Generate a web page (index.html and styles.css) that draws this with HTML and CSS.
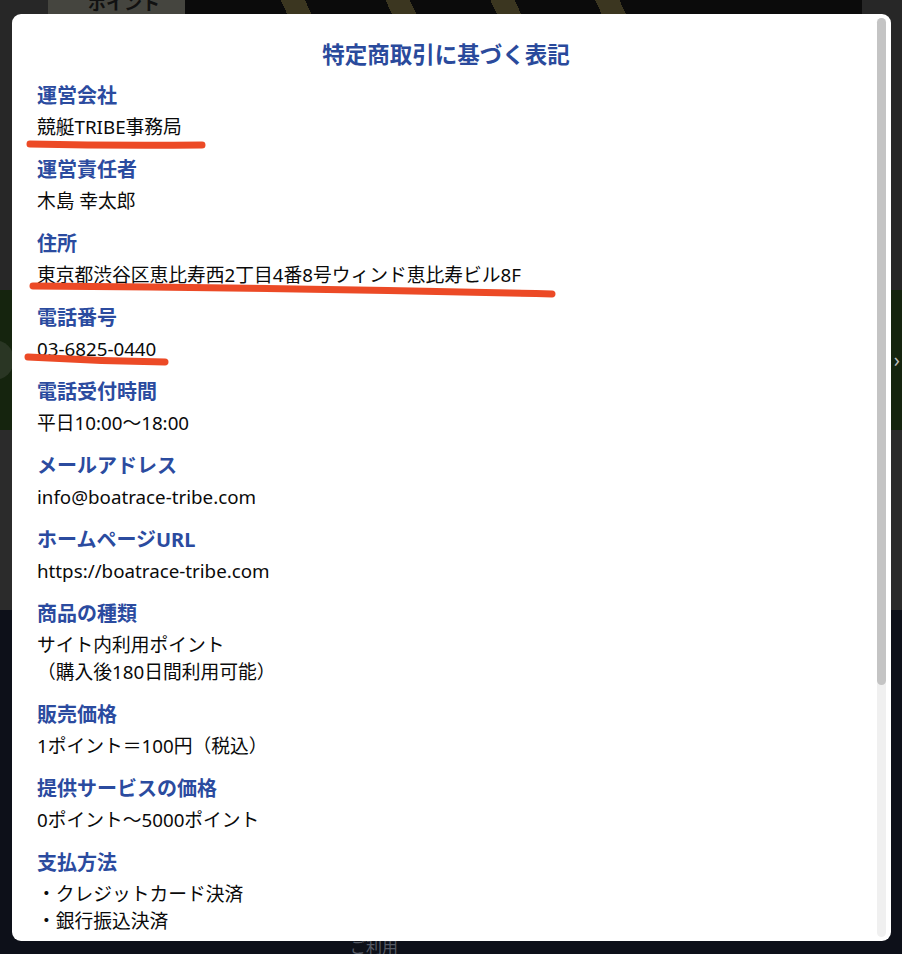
FILE: index.html
```html
<!DOCTYPE html>
<html lang="ja">
<head>
<meta charset="utf-8">
<title>特定商取引に基づく表記</title>
<link rel="stylesheet" href="styles.css">
</head>
<body>
<div class="page">
  <header class="band band-top">
    <div class="hero">
      <div class="hero-badge">ポイント</div>
      <div class="hero-art"></div>
    </div>
  </header>
  <div class="band band-green">
    <span class="circle"></span>
    <span class="arrow">›</span>
  </div>
  <div class="band band-gray"></div>
  <div class="band band-navy">
    <p class="navy-text">ご利用</p>
  </div>
</div>

<div class="modal">
  <div class="scroll">
    <div class="sheet">
      <h2 class="title">特定商取引に基づく表記</h2>
      <section class="item"><h3 class="label">運営会社</h3><p class="value">競艇TRIBE事務局</p></section>
      <section class="item"><h3 class="label">運営責任者</h3><p class="value">木島 幸太郎</p></section>
      <section class="item"><h3 class="label">住所</h3><p class="value">東京都渋谷区恵比寿西2丁目4番8号ウィンド恵比寿ビル8F</p></section>
      <section class="item"><h3 class="label">電話番号</h3><p class="value">03-6825-0440</p></section>
      <section class="item"><h3 class="label">電話受付時間</h3><p class="value">平日10:00〜18:00</p></section>
      <section class="item"><h3 class="label">メールアドレス</h3><p class="value">info@boatrace-tribe.com</p></section>
      <section class="item"><h3 class="label">ホームページURL</h3><p class="value">https://boatrace-tribe.com</p></section>
      <section class="item"><h3 class="label">商品の種類</h3><p class="value">サイト内利用ポイント<br>（購入後180日間利用可能）</p></section>
      <section class="item"><h3 class="label">販売価格</h3><p class="value">1ポイント＝100円（税込）</p></section>
      <section class="item"><h3 class="label">提供サービスの価格</h3><p class="value">0ポイント〜5000ポイント</p></section>
      <section class="item"><h3 class="label">支払方法</h3><p class="value">・クレジットカード決済<br>・銀行振込決済</p></section>
      <section class="item"><h3 class="label">代金の支払時期</h3><p class="value">ご注文時にお支払いいただきます</p></section>
      <section class="item"><h3 class="label">商品の引渡時期</h3><p class="value">決済完了後、即時反映</p></section>

      <svg class="marks" viewBox="0 0 860 400" width="860" height="400" aria-hidden="true">
        <path d="M14 126 Q100 128 186 127" />
        <path d="M17 268 Q280 270 536 276" />
        <path d="M12 339 Q80 343 149 344" />
      </svg>
    </div>
  </div>
  <div class="scrollbar"><div class="thumb"></div></div>
</div>
</body>
</html>
```

FILE: styles.css
```css
* { box-sizing: border-box; }

html, body {
  margin: 0;
  padding: 0;
}

body {
  width: 902px;
  height: 954px;
  overflow: hidden;
  background: #0d1019;
  font-family: "Noto Sans", "Noto Sans CJK JP", sans-serif;
}

.page {
  display: flex;
  flex-direction: column;
}

.band { width: 100%; }

.band-top {
  height: 290px;
  background: #272727;
}

.hero {
  display: flex;
  height: 16px;
  margin: 0 40px 0 48px;
  background: #0b0b0b;
}

.hero-badge {
  width: 137px;
  background: #45453f;
  color: #111;
  font-weight: 700;
  font-size: 18px;
  line-height: 18px;
  padding-left: 40px;
  margin-top: -6px;
}

.hero-art {
  flex: 1;
  margin: 0 170px 0 70px;
  background: repeating-linear-gradient(65deg, #0b0b0b 0 30px, #3b3620 30px 52px, #0b0b0b 52px 95px);
}

.band-green {
  height: 140px;
  background: #15240e;
  display: flex;
  justify-content: space-between;
  align-items: center;
  padding: 0 2px 0 0;
}

.circle {
  width: 40px;
  height: 40px;
  border-radius: 50%;
  background: #2a3624;
  margin-left: -26px;
}

.arrow {
  color: #bbb;
  font-size: 20px;
  line-height: 20px;
}

.band-gray {
  height: 180px;
  background: #2b2b2b;
}

.band-navy {
  height: 344px;
  background: #0d1019;
  padding-top: 327px;
}

.navy-text {
  margin: 0 0 0 350px;
  color: #565b66;
  font-size: 16px;
  line-height: 20px;
}

.modal {
  position: fixed;
  left: 12px;
  top: 14px;
  width: 879px;
  height: 927px;
  padding: 4px 15px 4px 4px;
  background: #ffffff;
  border-radius: 9px;
}

.scroll {
  height: 100%;
  overflow: hidden;
}

.scrollbar {
  position: absolute;
  right: 5px;
  top: 4px;
  bottom: 4px;
  width: 9px;
  background: #f0f0f0;
  border-radius: 5px;
}

.thumb {
  height: 667px;
  background: #c4c4c4;
  border-radius: 5px;
}

.sheet {
  position: relative;
  padding: 20px 21px 50px;
}

.title {
  margin: 0 0 9px;
  text-align: center;
  color: #2a4a9c;
  font-size: 22.5px;
  line-height: 34px;
  font-weight: 700;
}

.item {
  margin: 0 0 15px;
}

.label {
  margin: 0 0 2px;
  color: #2b4b9f;
  font-size: 20px;
  line-height: 30px;
  font-weight: 700;
}

.value {
  margin: 0;
  color: #0a0a0a;
  font-size: 18.75px;
  line-height: 27px;
}

.marks {
  position: absolute;
  left: 0;
  top: 0;
  pointer-events: none;
  fill: none;
  stroke: #ec4a26;
  stroke-width: 7;
  stroke-linecap: round;
}
```
